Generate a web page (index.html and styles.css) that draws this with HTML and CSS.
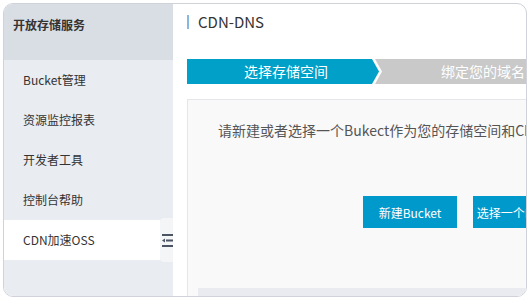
FILE: index.html
```html
<!DOCTYPE html>
<html lang="zh-CN">
<head>
    <meta charset="UTF-8">
    <meta name="viewport" content="width=device-width, initial-scale=1.0">
    <title>CDN-DNS - 开放存储服务</title>
    <link rel="stylesheet" href="styles.css">
</head>
<body>
    <div class="frame">
        <!-- Sidebar -->
        <div class="sidebar">
            <div class="sidebar-title">开放存储服务</div>
            <div class="nav-item">Bucket管理</div>
            <div class="nav-item">资源监控报表</div>
            <div class="nav-item">开发者工具</div>
            <div class="nav-item">控制台帮助</div>
            <div class="nav-item active">
                CDN加速OSS
                <span class="collapse-tab">
                    <svg width="11" height="13" viewBox="0 0 11 13">
                        <rect x="0" y="0" width="11" height="2" fill="#4b5463"/>
                        <rect x="4" y="5.5" width="7" height="2" fill="#4b5463"/>
                        <path d="M0 6.5 L3 4.5 L3 8.5 Z" fill="#4b5463"/>
                        <rect x="0" y="11" width="11" height="2" fill="#4b5463"/>
                    </svg>
                </span>
            </div>
        </div>

        <!-- Main -->
        <div class="main">
            <div class="page-title">CDN-DNS</div>

            <div class="steps">
                <div class="step step-first current">选择存储空间</div>
                <div class="step step-next">绑定您的域名</div>
            </div>

            <div class="panel">
                <p class="panel-text">请新建或者选择一个Bukect作为您的存储空间和CDN加速的源站</p>
                <div class="panel-actions">
                    <button class="btn">新建Bucket</button>
                    <button class="btn">选择一个Bucket</button>
                </div>
                <div class="panel-footer"></div>
            </div>
        </div>
    </div>
</body>
</html>
```

FILE: styles.css
```css
body {
    margin: 0;
    font-family: "Noto Sans CJK SC", sans-serif;
    background: #fff;
    color: #333;
}
.frame {
    margin: 3px 0 0 3px;
    width: 524px;
    height: 294px;
    box-sizing: border-box;
    border: 1px solid #cfd2d9;
    border-radius: 10px;
    overflow: hidden;
    display: flex;
    background: #fff;
}
.sidebar {
    width: 169px;
    flex-shrink: 0;
    background: #e9ecf1;
}
.sidebar-title {
    height: 56px;
    box-sizing: border-box;
    padding: 11px 0 0 9px;
    line-height: 20px;
    font-size: 12px;
    font-weight: bold;
    background: #d9dde4;
}
.nav-item {
    position: relative;
    height: 40px;
    line-height: 40px;
    padding-left: 19px;
    font-size: 12px;
    color: #333;
}
.nav-item.active {
    background: #fff;
    margin-right: 13px;
}
.collapse-tab {
    position: absolute;
    right: -13px;
    top: -2px;
    width: 13px;
    height: 44px;
    background: #f4f5f7;
    border-radius: 4px 0 0 4px;
    display: flex;
    align-items: center;
    justify-content: flex-end;
}
.collapse-tab svg {
    display: block;
}
.main {
    flex: 1;
    padding: 11px 0 0 14px;
    min-width: 0;
}
.page-title {
    height: 14px;
    line-height: 14px;
    border-left: 2px solid #88b7e0;
    padding-left: 9px;
    font-size: 15px;
    color: #333;
}
.steps {
    display: flex;
    margin-top: 30px;
    height: 25px;
}
.step {
    flex-shrink: 0;
    box-sizing: border-box;
    height: 25px;
    line-height: 25px;
    font-size: 14px;
    color: #fff;
    text-align: center;
}
.step-first {
    width: 193px;
    padding-left: 5px;
    background: #00a0c8;
    clip-path: polygon(0 0, 185px 0, 192px 50%, 185px 100%, 0 100%);
}
.step-next {
    width: 216px;
    margin-left: -5px;
    background: #c9c9c9;
    clip-path: polygon(0 0, 100% 0, 100% 100%, 0 100%, 7px 50%);
}
.panel {
    margin-top: 15px;
    width: 560px;
    height: 220px;
    border: 1px solid #e4e6eb;
    background: #f9f9fa;
    padding: 0 10px;
}
.panel-text {
    margin: 20px 0 0 20px;
    line-height: 20px;
    font-size: 14px;
    color: #555;
    white-space: nowrap;
}
.panel-actions {
    display: flex;
    gap: 16px;
    margin: 56px 0 0 165px;
}
.btn {
    width: 94px;
    height: 32px;
    border: none;
    padding: 0;
    background: #0099cc;
    color: #fff;
    font-family: inherit;
    font-size: 12px;
    white-space: nowrap;
    cursor: pointer;
}
.panel-footer {
    margin-top: 60px;
    height: 20px;
    background: #e9ebf0;
}
```
